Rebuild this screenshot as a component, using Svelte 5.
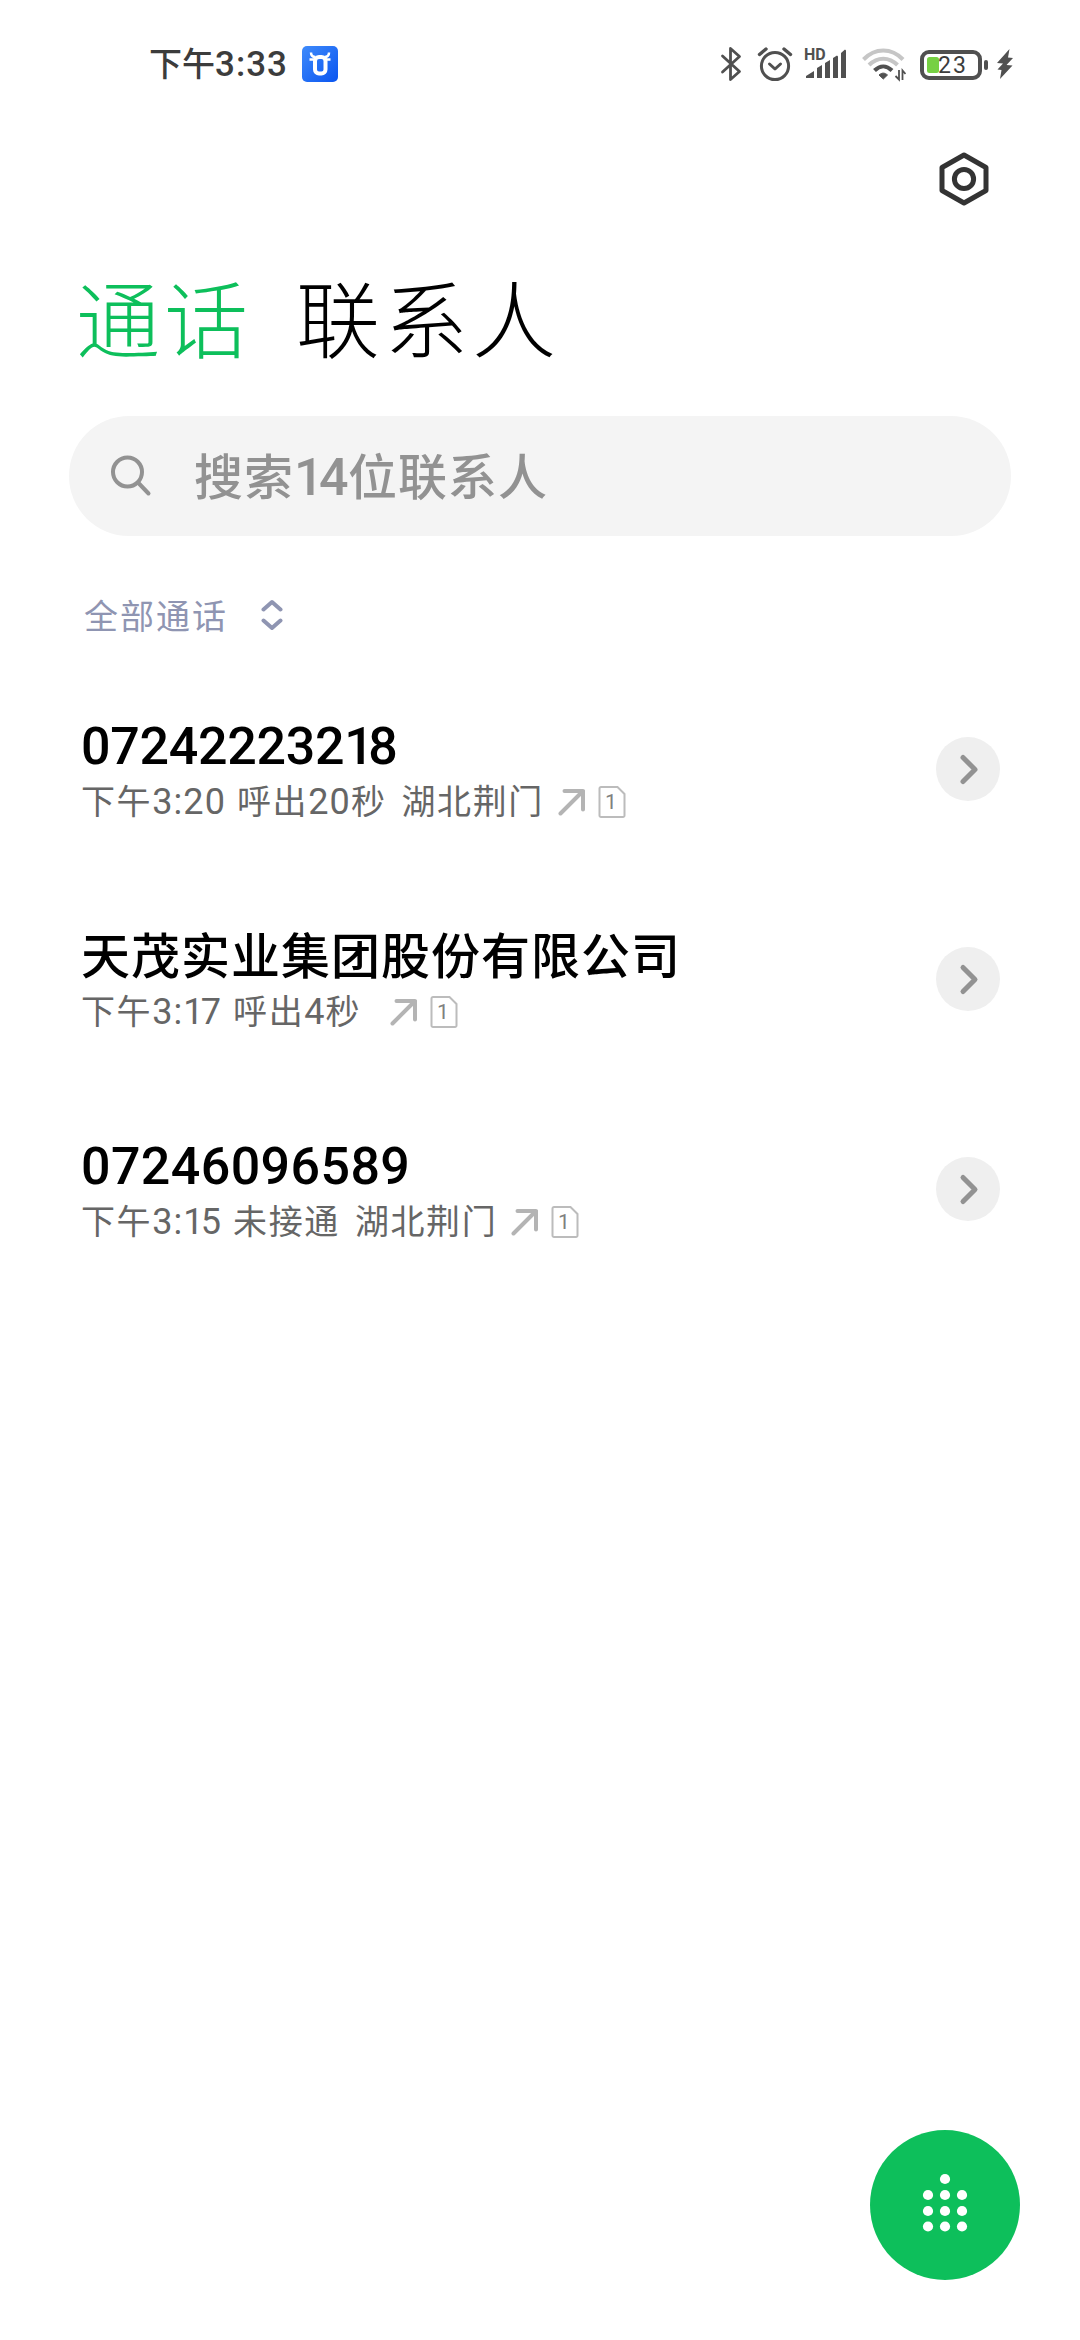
<script>
    const tabs = ["通话", "联系人"];
    let activeTab = "通话";

    const contactCount = 14;

    const calls = [
        { title: "07242223218", time: "下午3:20", status: "呼出20秒", place: "湖北荆门", sim: 1 },
        { title: "天茂实业集团股份有限公司", time: "下午3:17", status: "呼出4秒", place: "", sim: 1 },
        { title: "07246096589", time: "下午3:15", status: "未接通", place: "湖北荆门", sim: 1 },
    ];

    const dots = [
        [25, 6],
        [8, 22], [25, 22], [42, 22],
        [8, 38], [25, 38], [42, 38],
        [8, 53.5], [25, 53.5], [42, 53.5],
    ];

    // digits are set a bit larger than the Chinese text, and "1" is narrow
    function split(text) {
        return text.match(/1|[02-9:]+|[^0-9:]+/g) || [];
    }
</script>

{#snippet mixed(text)}{#each split(text) as part}{#if /[0-9:]/.test(part)}<span class="num" class:one={part === "1"}>{part}</span>{:else}{part}{/if}{/each}{/snippet}

<div class="screen">
    <header class="status">
        <span class="clock">{@render mixed("下午3:33")}</span>
        <svg class="app" width="36" height="36" viewBox="0 0 36 36">
            <defs>
                <linearGradient id="blue" x1="0" y1="0" x2="1" y2="1">
                    <stop offset="0" stop-color="#3f8bfb" />
                    <stop offset="1" stop-color="#0a55f0" />
                </linearGradient>
            </defs>
            <rect width="36" height="36" rx="5" fill="url(#blue)" />
            <path d="M9 6.500c0 3 1.500 4.500 4.500 4.500M27 6.500c0 3-1.500 4.500-4.500 4.500" fill="none" stroke="#fff" stroke-width="2.500" />
            <path d="M7.500 13.500h5M23.500 13.500h5" stroke="#fff" stroke-width="2.500" />
            <rect x="13" y="11" width="10.500" height="16.500" rx="4" fill="none" stroke="#fff" stroke-width="4" />
        </svg>
        <div class="indicators">
            <svg width="22" height="36" viewBox="0 0 22 36" fill="none" stroke="#505050" stroke-width="2.800" stroke-linejoin="round" stroke-linecap="round">
                <path d="M2.500 10 19.500 25.500 10.500 33.500V2.500L19.500 10.500 2.500 26" />
            </svg>
            <svg class="alarm" width="36" height="36" viewBox="0 0 36 36" fill="none" stroke="#505050">
                <circle cx="18" cy="20" r="13.600" stroke-width="3" />
                <path d="M12.500 18l5.500 5 5.500-5" stroke-width="3" stroke-linecap="round" stroke-linejoin="round" />
                <path d="M2.500 8.500 9 3M33.500 8.500 27 3" stroke-width="3.400" stroke-linecap="round" />
            </svg>
            <svg class="signal" width="44" height="36" viewBox="0 0 44 36" fill="#505050">
                <text x="0" y="13.500" font-size="16" font-weight="700">HD</text>
                <path d="M2 32v-2l8-5v7zM13 32V22l5-3v13zM21 32V17l5-3v18zM29 32V12l4-2.500 1 1V32zM37 32V7l4-3.500 1 1V32z" />
            </svg>
            <svg class="wifi" width="44" height="36" viewBox="0 0 44 36" fill="none" stroke-width="4">
                <path d="M1.500 13.500C13 1.500 29.500 1.500 41 13.500" stroke="#c6c6c6" />
                <path d="M7 19c8.500-8.500 20-8.500 28.500 0" stroke="#c6c6c6" />
                <path d="M12.500 24.500c5.500-5.500 12-5.500 17.500 0" stroke="#505050" />
                <path d="M17 29c3-2.500 5.500-2.500 8.500 0l-4.200 4z" fill="#505050" stroke="#505050" stroke-width="1" />
                <path d="M37 24v9.500l-3.500-3.500M40.500 34v-9.500l3 3.500" stroke="#505050" stroke-width="1.800" />
            </svg>
            <svg class="battery" width="70" height="36" viewBox="0 0 70 36">
                <rect x="2" y="6" width="58" height="26" rx="7" fill="none" stroke="#505050" stroke-width="4" />
                <rect x="7" y="11" width="12" height="16" rx="2.500" fill="#76d043" />
                <rect x="64" y="14" width="4" height="10" rx="2" fill="#505050" />
                <text x="18" y="27" font-size="23" font-weight="400" fill="#3c3c3c" textLength="28">23</text>
            </svg>
            <svg width="18" height="36" viewBox="0 0 18 36" fill="#505050">
                <path d="M13.500 3 1 17l6 .5-5.500 6 4 .5L4 33l12.500-13.500-6-.5L17 12l-5-.5z" />
            </svg>
        </div>
    </header>

    <div class="toolbar">
        <svg width="50" height="56" viewBox="0 0 50 56" fill="none" stroke="#333" stroke-width="5" stroke-linejoin="round">
            <path d="M25 4 47 16.500V39.500L25 52 3 39.500V16.500z" />
            <circle cx="25" cy="28" r="9.600" />
        </svg>
    </div>

    <nav>
        {#each tabs as tab}
            <button class="tab" class:active={tab === activeTab} on:click={() => (activeTab = tab)}>{tab}</button>
        {/each}
    </nav>

    <div class="search">
        <svg width="44" height="44" viewBox="0 0 44 44" fill="none" stroke="#929292" stroke-width="4" stroke-linecap="round">
            <circle cx="18.500" cy="18" r="14.500" />
            <path d="M29 28.500 39.500 39.500" />
        </svg>
        <span class="hint">{@render mixed(`搜索${contactCount}位联系人`)}</span>
    </div>

    <div class="filter">
        <span>全部通话</span>
        <svg width="22" height="32" viewBox="0 0 22 32" fill="none" stroke="#8f95b2" stroke-width="4" stroke-linecap="round" stroke-linejoin="round">
            <path d="M2.500 10.500 11 3l8.500 7.500M2.500 21.500 11 29l8.500-7.500" />
        </svg>
    </div>

    <ul>
        {#each calls as call}
            <li>
                <div class="info">
                    <div class="title">{@render mixed(call.title)}</div>
                    <div class="detail">
                        <span class="time">{@render mixed(call.time)}</span>
                        <span class="state">{@render mixed(call.status)}</span>
                        <span class="place">{call.place}</span>
                        <svg class="arrow" width="28" height="28" viewBox="0 0 28 28" fill="none" stroke="#b4b4b4" stroke-width="4" stroke-linecap="round" stroke-linejoin="round">
                            <path d="M6.500 3H25V21.500M25 3 2.500 25.500" />
                        </svg>
                        <svg class="sim" width="28" height="32" viewBox="0 0 28 32">
                            <path d="M3 1h16.500L26.500 8v21.500a1.500 1.500 0 0 1-1.500 1.500H3a1.500 1.500 0 0 1-1.500-1.500V2.500A1.500 1.500 0 0 1 3 1z" fill="none" stroke="#bcbcbc" stroke-width="2" />
                            <text x="13" y="23" font-size="21" fill="#808080" text-anchor="middle" letter-spacing="0">{call.sim}</text>
                        </svg>
                    </div>
                </div>
                <button class="more" aria-label="详情">
                    <svg width="64" height="64" viewBox="0 0 64 64" fill="none" stroke="#929292" stroke-width="5" stroke-linecap="round" stroke-linejoin="round">
                        <path d="M27 20.500 39 32.500 27 44.500" />
                    </svg>
                </button>
            </li>
        {/each}
    </ul>

    <button class="dial" aria-label="拨号">
        <svg width="50" height="64" viewBox="0 0 50 64" fill="#fff">
            {#each dots as [x, y]}
                <circle cx={x} cy={y} r="5.100" />
            {/each}
        </svg>
    </button>
</div>

<style>
    .screen {
        position: relative;
        box-sizing: border-box;
        width: 1080px;
        height: 2340px;
        background: #fff;
        overflow: hidden;
        font-family: Roboto, "Noto Sans CJK SC", sans-serif;
    }

    svg {
        display: block;
        flex: none;
    }

    button {
        padding: 0;
        border: none;
        background: none;
        font-family: inherit;
    }

    .num {
        font-size: 1.06em;
        line-height: 1;
        letter-spacing: 0.03em;
    }

    .status {
        display: flex;
        align-items: center;
        height: 128px;
        padding: 0 66px 0 149px;
    }

    .clock {
        width: 153px;
        font-size: 33px;
        line-height: 40px;
        margin-top: 2px;
        font-weight: 500;
        color: #3c3c3c;
        white-space: nowrap;
    }

    .indicators {
        display: flex;
        margin-left: auto;
    }

    .alarm {
        margin-left: 15px;
    }

    .signal {
        margin-left: 11px;
    }

    .wifi {
        margin-left: 14px;
    }

    .battery {
        margin: 0 6px 0 14px;
    }

    .toolbar {
        display: flex;
        justify-content: flex-end;
        padding: 23px 91px 0 0;
    }

    nav {
        display: flex;
        gap: 44px;
        height: 120px;
        margin-top: 57px;
        padding-left: 76px;
    }

    .tab {
        font-size: 84px;
        font-weight: 300;
        line-height: 120px;
        letter-spacing: 4px;
        color: #000;
    }

    .tab.active {
        color: #0dbf5b;
    }

    .search {
        display: flex;
        align-items: center;
        gap: 41px;
        box-sizing: border-box;
        width: 942px;
        height: 120px;
        margin: 32px 0 0 69px;
        padding-left: 40px;
        border-radius: 60px;
        background: #f4f4f4;
        color: #929292;
        font-size: 49px;
        font-weight: 500;
        letter-spacing: 1px;
    }

    .hint {
        height: 64px;
        line-height: 70px;
    }

    .hint .num {
        letter-spacing: -0.01em;
    }

    .hint .one {
        letter-spacing: -0.09em;
    }

    .filter {
        display: flex;
        align-items: center;
        gap: 33px;
        height: 50px;
        margin: 54px 0 0 84px;
        color: #8f95b2;
        font-size: 34px;
        letter-spacing: 2px;
    }

    .filter span {
        margin-top: -2px;
    }

    ul {
        margin: 0;
        padding: 24px 80px 0 81px;
        list-style: none;
    }

    li {
        display: flex;
        align-items: center;
        justify-content: space-between;
        height: 210px;
    }

    .title {
        height: 62px;
        line-height: 73px;
        font-size: 49px;
        font-weight: 500;
        letter-spacing: 1px;
        color: #000;
    }

    .title .num {
        letter-spacing: 0.008em;
    }

    .title:has(.one) .num {
        letter-spacing: -0.005em;
    }

    .title .num.one {
        letter-spacing: -0.11em;
    }

    .detail {
        display: flex;
        align-items: center;
        height: 54px;
        line-height: 59px;
        font-size: 34px;
        letter-spacing: 1.600px;
        color: #666;
        white-space: nowrap;
    }

    .detail > span {
        height: 54px;
    }

    .detail .one {
        letter-spacing: -0.08em;
    }

    .state {
        margin-left: 11px;
    }

    .place {
        margin-left: 15px;
    }

    .arrow {
        margin: 3px 0 0 14px;
    }

    .sim {
        margin: 3px 0 0 12px;
    }

    .more {
        width: 64px;
        height: 64px;
        border-radius: 50%;
        background: #efefef;
    }

    .dial {
        position: absolute;
        right: 60px;
        bottom: 60px;
        display: flex;
        align-items: center;
        justify-content: center;
        width: 150px;
        height: 150px;
        border-radius: 50%;
        background: #0dbf5b;
    }
</style>
